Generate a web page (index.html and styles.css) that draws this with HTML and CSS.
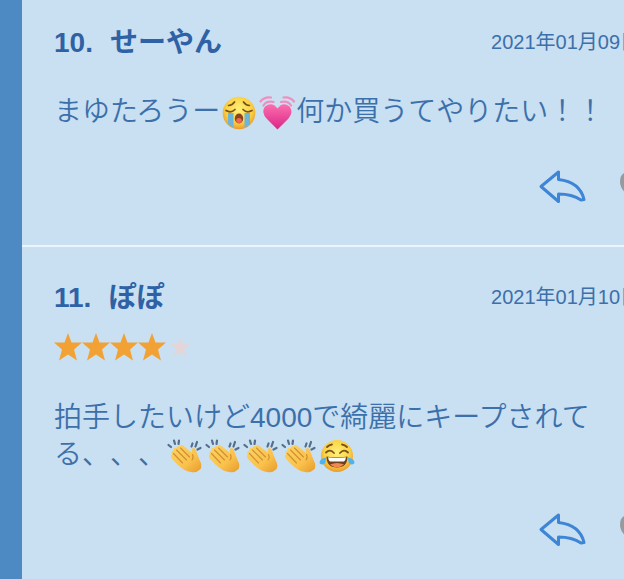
FILE: index.html
```html
<!DOCTYPE html>
<html lang="ja">
<head>
<meta charset="utf-8">
<meta name="viewport" content="width=device-width, initial-scale=1">
<title>コメント</title>
<link rel="stylesheet" href="styles.css">
</head>
<body>
<svg class="sprite" aria-hidden="true">
  <defs>
    <radialGradient id="face" cx="50%" cy="40%" r="60%">
      <stop offset="0" stop-color="#fff17a"/><stop offset=".65" stop-color="#fbd344"/><stop offset="1" stop-color="#e99a2c"/>
    </radialGradient>
    <linearGradient id="tear" x1="0" y1="0" x2="0" y2="1">
      <stop offset="0" stop-color="#6bb5d6"/><stop offset="1" stop-color="#6fb4dc"/>
    </linearGradient>
    <linearGradient id="pink" x1="0" y1="0" x2="0" y2="1">
      <stop offset="0" stop-color="#fb6fae"/><stop offset="1" stop-color="#dc2487"/>
    </linearGradient>
    <linearGradient id="skin" x1="0" y1="0" x2="1" y2="1">
      <stop offset="0" stop-color="#fbd262"/><stop offset=".6" stop-color="#fac24d"/><stop offset="1" stop-color="#e79a2a"/>
    </linearGradient>
    <symbol id="sob" viewBox="0 0 38 34">
      <circle cx="19" cy="17" r="16.300" fill="url(#face)"/>
      <path d="M8 17h5.500v14.500Q10 30 8 28zM24.500 17H30v11q-2 2-5.500 3.500z" fill="url(#tear)"/>
      <path d="M6 14.500q5 3 9-1M32 14.500q-5 3-9-1M8.500 9.500q4-.5 6-3.500M29.500 9.500q-4-.5-6-3.500" fill="none" stroke="#79511f" stroke-width="1.700" stroke-linecap="round"/>
      <ellipse cx="19" cy="22.500" rx="4.200" ry="5" fill="#8b431c"/>
      <ellipse cx="19" cy="24.500" rx="2.800" ry="2.500" fill="#ef684f"/>
    </symbol>
    <symbol id="heart" viewBox="0 0 38 34">
      <path d="M19.500 33.500Q15 29 9 23 2.500 16 7 10.500q7-5.500 12.500 2 5.500-7.500 12-2 4.500 5.500-1 12-6.500 6.500-11 11z" fill="url(#pink)"/>
      <path d="M5.500 9.500q3-5 10-3.500M33 9.500q-3-5-10-3.500M2.500 5.500q4-5 10.500-4M36 5.500q-4-5-10.500-4" fill="none" stroke="#ef8fc0" stroke-width="2.200" stroke-linecap="round"/>
    </symbol>
    <symbol id="clap" viewBox="0 0 38 34">
      <path d="M6 15.500q-2-3.500 1.500-3.500-.5-4 3-3 .5-3 3.500-1.500.5-2.500 3.500-.5l8.500 7q-1-5 1.500-5 2 0 3 4l3 8q3.500 6 .5 9.500-3.500 3.500-9 2.500-7-1-13.500-7.500-4.500-4.500-6-6.500-1.500-2.500.5-3.500z" fill="url(#skin)"/>
      <path d="M7.500 14.500l9 9.500M10.500 11l10 10M14.500 9l9 9M26.500 15.500q1.500 3-.5 5.500" fill="none" stroke="#cf8f30" stroke-width="1.100" stroke-linecap="round"/>
      <path d="M2.500 6l2.500 2M8 1.500l1 3.500M13 1.500l-.5 3.500M26.500 4.500l-1 3M31 3l-1.500 4.500M34.500 9l-3 1.500" fill="none" stroke="#536f8c" stroke-width="2.200" stroke-linecap="round"/>
    </symbol>
    <symbol id="joy" viewBox="0 0 38 34">
      <circle cx="19" cy="17" r="16" fill="url(#face)"/>
      <path d="M8 13.500q4-4 8 .5M30 13.500q-4-4-8 .5M9 8q2-2 5-2.500M29 8q-2-2-5-2.500" fill="none" stroke="#79511f" stroke-width="1.800" stroke-linecap="round"/>
      <path d="M8.500 17.500q10.500 2 21 0 0 11-10.500 11t-10.500-11z" fill="#71401c"/>
      <path d="M10 18.200q9 1.500 18 0-.4 3.300-2 4.300H12q-1.600-1-2-4.300z" fill="#fff"/>
      <path d="M12 25.500q7-3 14 0-7 5.500-14 0z" fill="#f08a50"/>
      <path d="M8 18.500q0 7.500-4 7T2.500 21q1.500-2 5.500-2.500zM30 18.500q0 7.500 4 7t1.500-4.500q-1.500-2-5.500-2.500z" fill="#4fb4ee"/>
    </symbol>
    <symbol id="reply" viewBox="0 0 48 36">
      <path d="M3 17.500L20.500 3V10.500Q42 13 46 30.500L43 31Q34 25 20.500 25v7.500z" fill="none" stroke="#3e85d6" stroke-width="3" stroke-linejoin="round"/>
    </symbol>
    <symbol id="star" viewBox="0 0 28 28">
      <path d="M14 0l3.500 9.500H28l-8 7L23 27.500l-9-6-9 6 3-11-8-7h10.500z"/>
    </symbol>
    <symbol id="like" viewBox="0 0 36 36">
      <path d="M18 33Q0 23 0 13 0 3 9 3q6 0 9 5 3-5 9-5 9 0 9 10 0 10-18 20z" fill="#969ba0"/>
    </symbol>
  </defs>
</svg>
<main class="comments">
  <article class="comment">
    <header class="comment-head">
      <h2 class="author"><span>10.</span><span>せーやん</span></h2>
      <time class="date" datetime="2021-01-09">2021年01月09日</time>
    </header>
    <p class="text">まゆたろうー<svg class="emoji" role="img" aria-label="😭"><use href="#sob"/></svg><svg class="emoji" role="img" aria-label="💓"><use href="#heart"/></svg>何か買うてやりたい！！</p>
    <footer class="actions">
      <button class="action" type="button" aria-label="返信"><svg class="reply"><use href="#reply"/></svg></button>
      <button class="action" type="button" aria-label="いいね"><svg class="like"><use href="#like"/></svg></button>
    </footer>
  </article>
  <article class="comment">
    <header class="comment-head">
      <h2 class="author"><span>11.</span><span>ぽぽ</span></h2>
      <time class="date" datetime="2021-01-10">2021年01月10日</time>
    </header>
    <div class="rating" role="img" aria-label="4 / 5">
      <svg class="star"><use href="#star"/></svg><svg class="star"><use href="#star"/></svg><svg class="star"><use href="#star"/></svg><svg class="star"><use href="#star"/></svg><svg class="star star-off"><use href="#star"/></svg>
    </div>
    <p class="text">拍手したいけど4000で綺麗にキープされてる、、、<svg class="emoji" role="img" aria-label="👏"><use href="#clap"/></svg><svg class="emoji" role="img" aria-label="👏"><use href="#clap"/></svg><svg class="emoji" role="img" aria-label="👏"><use href="#clap"/></svg><svg class="emoji" role="img" aria-label="👏"><use href="#clap"/></svg><svg class="emoji" role="img" aria-label="😂"><use href="#joy"/></svg></p>
    <footer class="actions">
      <button class="action" type="button" aria-label="返信"><svg class="reply"><use href="#reply"/></svg></button>
      <button class="action" type="button" aria-label="いいね"><svg class="like"><use href="#like"/></svg></button>
    </footer>
  </article>
</main>
</body>
</html>
```
FILE: styles.css
```css
* { box-sizing: border-box; }

body {
  margin: 0;
  min-height: 100vh;
  display: flex;
  overflow: hidden;
  background: #c9dff2;
  color: #3c70aa;
  font-family: "Liberation Sans", "Noto Sans CJK JP", sans-serif;
  text-spacing-trim: space-all;
}

.sprite { position: absolute; width: 0; height: 0; }

.comments {
  flex: 1;
  min-width: 0;
  margin-right: -16px;
  border-left: 22px solid #4d89c2;
}

.comment { padding: 30px 0 40px 32px; }
.comment:first-child { padding-top: 22px; }
.comment + .comment { border-top: 2px solid #eaf5fd; }

.comment-head {
  display: flex;
  align-items: flex-start;
  justify-content: space-between;
}

.author {
  display: flex;
  gap: 17px;
  margin: 0;
  color: #2f62a5;
  font-size: 28px;
  line-height: 42px;
  white-space: nowrap;
}

.date {
  font-size: 20px;
  line-height: 40px;
  white-space: nowrap;
}

.rating {
  display: flex;
  margin: 14px 0 -8px;
}

.star { width: 28px; height: 28px; fill: #f2a235; }
.star-off { padding: 4px; fill: #e4d5d9; }

.text {
  margin: 29px 32px 39px 0;
  font-size: 28px;
  font-weight: 350;
  line-height: 37px;
}

.rating + .text { margin-top: 46px; }

.emoji {
  width: 38px;
  height: 34px;
  margin: -4px 0;
  vertical-align: -5px;
}

.actions {
  display: flex;
  justify-content: flex-end;
  gap: 34px;
  margin-right: -16px;
}

.action {
  display: block;
  padding: 0;
  border: 0;
  background: none;
}

.reply { display: block; width: 48px; height: 36px; }
.like { display: block; width: 36px; height: 36px; }
```
